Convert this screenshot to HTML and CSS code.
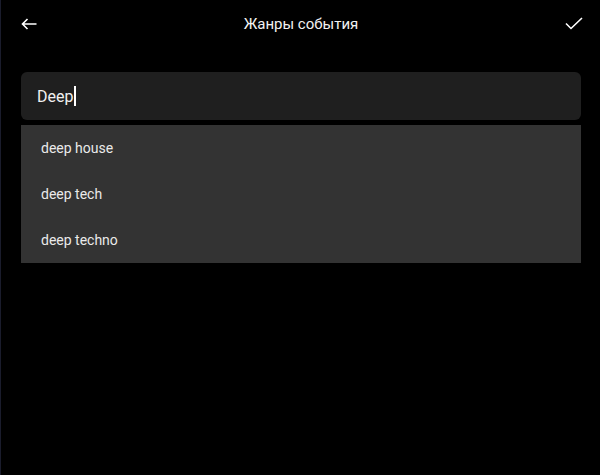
FILE: index.html
```html
<!DOCTYPE html>
<html lang="ru">
<head>
    <meta charset="UTF-8">
    <meta name="viewport" content="width=device-width, initial-scale=1.0">
    <title>Жанры события</title>
    <link rel="stylesheet" href="styles.css">
</head>
<body>
    <div class="screen">
        <header class="topbar">
            <button class="icon-btn" aria-label="Назад">
                <svg width="16" height="12" viewBox="0 0 16 12"><path d="M15.5 6H1.5M6.5 1L1.5 6l5 5" fill="none" stroke="#fff" stroke-width="1.6"/></svg>
            </button>
            <h1 class="title">Жанры события</h1>
            <button class="icon-btn done" aria-label="Готово">
                <svg width="18" height="13" viewBox="0 0 18 13"><path d="M1 6.5l5 5L17 1" fill="none" stroke="#fff" stroke-width="1.6"/></svg>
            </button>
        </header>

        <div class="search">
            <span class="search-text">Deep</span><span class="caret"></span>
        </div>

        <ul class="suggestions">
            <li>deep house</li>
            <li>deep tech</li>
            <li>deep techno</li>
        </ul>
    </div>
</body>
</html>
```

FILE: styles.css
```css
body {
    margin: 0;
    background-color: #000;
    font-family: Roboto, "Noto Sans", sans-serif;
    color: #fff;
}
.screen {
    height: 475px;
    border-left: 1px solid #1a1c2c;
    box-sizing: border-box;
    padding: 0 19px 0 20px;
}
.topbar {
    display: flex;
    align-items: center;
    justify-content: space-between;
    height: 47px;
}
.icon-btn {
    background: none;
    border: none;
    padding: 0;
    display: flex;
    align-items: center;
    cursor: pointer;
}
.done {
    margin-right: -2px;
}
.title {
    margin: 0;
    font-size: 15px;
    font-weight: 400;
    color: #f2f2f2;
}
.search {
    margin-top: 25px;
    height: 48px;
    background-color: #1f1f1f;
    border-radius: 6px;
    display: flex;
    align-items: center;
    padding-left: 16px;
}
.search-text {
    font-size: 16px;
    color: #f0f0f0;
}
.caret {
    width: 2px;
    height: 20px;
    background-color: #fff;
    margin-left: 1px;
}
.suggestions {
    list-style: none;
    margin: 5px 0 0;
    padding: 0;
    background-color: #333;
}
.suggestions li {
    height: 46px;
    line-height: 46px;
    padding-left: 20px;
    font-size: 14px;
    color: #eaeaea;
}
```
